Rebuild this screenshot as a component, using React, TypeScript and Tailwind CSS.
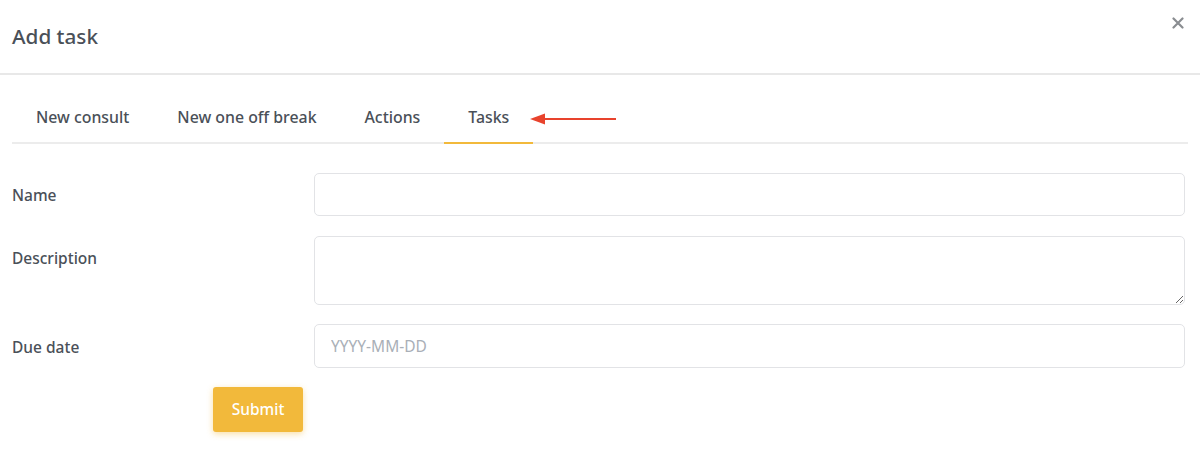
import React, { useState } from 'react';

const tabs = ['New consult', 'New one off break', 'Actions', 'Tasks'];

export default function App() {
  const [active, setActive] = useState('Tasks');
  const [name, setName] = useState('');
  const [description, setDescription] = useState('');
  const [due, setDue] = useState('');

  return (
    <div className="w-[1200px] h-[449px] bg-white text-[#4a5058] font-['Noto_Sans',sans-serif] overflow-hidden">
      <div className="flex items-center justify-between h-[75px] pl-3 pr-4 border-b-2 border-[#e8e8e8]">
        <h1 className="text-[20.7px] font-medium text-[#4a5058] mt-[1px]">Add task</h1>
        <button className="self-start mt-[17px] text-[#8a8d91]" aria-label="Close">
          <svg width="12" height="12" viewBox="0 0 12 12"><path d="M1.5 1.5l9 9M10.5 1.5l-9 9" stroke="currentColor" strokeWidth="2.2" strokeLinecap="round" /></svg>
        </button>
      </div>

      <div className="mx-3 flex items-end border-b-2 border-[#ececec] h-[69px]">
        {tabs.map((tab) => (
          <button
            key={tab}
            onClick={() => setActive(tab)}
            className={`relative px-6 pb-[12px] text-[15.85px] font-medium -mb-[2px] border-b-2 ${active === tab ? 'border-[#f2b93b] text-[#4a5058]' : 'border-transparent text-[#4a5058]'}`}
          >
            {tab}
            {tab === 'Tasks' && (
              <svg className="absolute left-[calc(100%-3px)] top-[6px]" width="88" height="14" viewBox="0 0 88 14">
                <path d="M14 7H86" stroke="#e8432d" strokeWidth="2" />
                <path d="M0 7L15 1.5V12.5Z" fill="#e8432d" />
              </svg>
            )}
          </button>
        ))}
      </div>

      <form className="pt-[29px] pl-3 pr-[15px] flex flex-col" onSubmit={(e) => e.preventDefault()}>
        <div className="flex items-center h-[43px]">
          <label className="w-[302px] text-[15.5px] font-medium mt-[2px]">Name</label>
          <input value={name} onChange={(e) => setName(e.target.value)} className="flex-1 h-[43px] rounded-[5px] border border-[#e2e3e6] px-4 outline-none" />
        </div>
        <div className="flex items-start mt-5">
          <label className="w-[302px] text-[15.5px] font-medium mt-[11px]">Description</label>
          <textarea value={description} onChange={(e) => setDescription(e.target.value)} className="flex-1 h-[69px] rounded-[5px] border border-[#e2e3e6] px-4 py-2 outline-none" />
        </div>
        <div className="flex items-center h-[44px] mt-[19px]">
          <label className="w-[302px] text-[15.5px] font-medium mt-[3px]">Due date</label>
          <input value={due} onChange={(e) => setDue(e.target.value)} placeholder="YYYY-MM-DD" className="flex-1 h-[44px] rounded-[5px] border border-[#e2e3e6] px-4 text-[15.5px] outline-none placeholder:text-[#a9afb7]" />
        </div>
        <div className="mt-[19px] pl-[201px]">
          <button type="submit" className="w-[90px] h-[45px] rounded-[3px] bg-[#f2b93b] text-white text-[15.5px] font-medium shadow-[0_2px_6px_rgba(242,185,59,0.45)]">Submit</button>
        </div>
      </form>
    </div>
  );
}
